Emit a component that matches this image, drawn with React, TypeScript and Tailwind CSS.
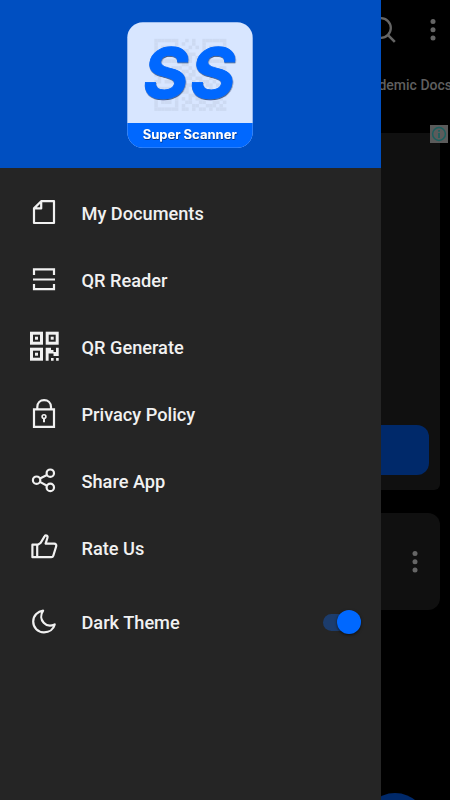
import React from 'react';

interface MenuItem {
  label: string;
  icon: React.ReactNode;
}

interface QrFinderProps {
  x: number;
  y: number;
}

const QrFinder: React.FC<QrFinderProps> = ({ x, y }) => (
  <>
    <rect x={x + 1.5} y={y + 1.5} width="10" height="10" fill="none" stroke="currentColor" strokeWidth="3" />
    <rect x={x + 5} y={y + 5} width="3" height="3" fill="currentColor" />
  </>
);

const Icon: React.FC<{ children: React.ReactNode }> = ({ children }) => (
  <svg
    className="h-8 w-8 shrink-0"
    viewBox="0 0 32 32"
    fill="none"
    stroke="currentColor"
    strokeWidth="2.2"
  >
    {children}
  </svg>
);

const menuItems: MenuItem[] = [
  {
    label: 'My Documents',
    icon: (
      <Icon>
        <path d="M13.2 4.2H26V26H6V11.4ZM13.2 4.2V11.4H6" strokeLinejoin="round" />
      </Icon>
    ),
  },
  {
    label: 'QR Reader',
    icon: (
      <Icon>
        <path d="M6 11V5.3H26V11M5 15.5H27M6 20V25.2H26V20" />
      </Icon>
    ),
  },
  {
    label: 'QR Generate',
    icon: (
      <Icon>
        <g stroke="none">
          <QrFinder x={2} y={0.7} />
          <QrFinder x={17.7} y={0.7} />
          <QrFinder x={2} y={16.7} />
          <path
            d="M17.7 16.7H23V19H25.5V21H28V16.7H30.7V25H25.5V22.5H20.6V29.7H17.7ZM23 27H25.6V29.7H23ZM28.1 27H30.7V29.7H28.1Z"
            fill="currentColor"
          />
        </g>
      </Icon>
    ),
  },
  {
    label: 'Privacy Policy',
    icon: (
      <Icon>
        <path d="M6 11.3H26V28.8H6ZM9.3 11V9C9.3 4.8 12.2 2.2 16.1 2.2S23 4.8 23 9V11" />
        <circle cx="16" cy="18.6" r="1.9" strokeWidth="1.6" />
        <path d="M16 20.5V24.2" strokeWidth="2" />
      </Icon>
    ),
  },
  {
    label: 'Share App',
    icon: (
      <Icon>
        <circle cx="8.6" cy="15.2" r="3.7" />
        <circle cx="22.3" cy="8.2" r="3.7" />
        <circle cx="22.3" cy="22.4" r="3.7" />
        <path d="M11.9 13.5L19 9.9M11.9 16.9L19 20.7" />
      </Icon>
    ),
  },
  {
    label: 'Rate Us',
    icon: (
      <Icon>
        <path
          d="M4.4 12.7H9.2V25.2H4.4ZM9.2 13.2L12.7 10.8L16.4 4.6C17.3 2.5 20.2 3.6 19.4 6L17.6 11.7H26.2C27.8 11.7 28.6 12.9 28.2 14.3L25.3 23.7C25 24.7 24.3 25.2 23.3 25.2H9.2"
          strokeLinejoin="round"
        />
      </Icon>
    ),
  },
];

// decorative code behind the logo letters, one string per row of modules
const qrRows = [
  '111111100101001111111',
  '100000101001001000001',
  '101110100010101011101',
  '101110101100001011101',
  '101110100111001011101',
  '100000101010101000001',
  '111111101010101111111',
  '000000001100100000000',
  '110101110010110101011',
  '011010001101011010010',
  '101101101011001101101',
  '010010010110110010110',
  '110111101001011101001',
  '000000001110100110110',
  '111111100101101010011',
  '100000101100011101100',
  '101110100011101011101',
  '101110101010110110010',
  '101110100110011001101',
  '100000101001100111010',
  '111111101101011010111',
];

const Logo: React.FC = () => (
  <svg className="h-[126px] w-[126px]" viewBox="0 0 126 126">
    <defs>
      <clipPath id="logo-clip">
        <rect x="0.3" y="0.3" width="125.4" height="125.4" rx="15.5" />
      </clipPath>
      <filter id="logo-shadow" x="-10%" y="-10%" width="120%" height="130%">
        <feDropShadow dx="0.4" dy="1" stdDeviation="0.7" floodColor="#001b4d" floodOpacity="0.7" />
      </filter>
    </defs>
    <g clipPath="url(#logo-clip)">
      <rect width="126" height="126" fill="#d8e6ff" />
      <g fill="#cddaf2">
        {qrRows.map((row, y) =>
          row.split('').map((cell, x) =>
            cell === '1' ? (
              <rect key={`${x}-${y}`} x={27.3 + x * 3.43} y={16.8 + y * 3.43} width="3.5" height="3.5" />
            ) : null
          )
        )}
      </g>
      <rect y="101" width="126" height="25" fill="#0068ff" />
    </g>
    <g filter="url(#logo-shadow)" fontFamily="Inter, 'Open Sans', sans-serif">
      <text
        transform="translate(0 75.8) skewX(-9)"
        x="13 60"
        y="0"
        fontSize="69.5"
        fontWeight="700"
        fill="#0068ff"
        stroke="#0068ff"
        strokeWidth="0.8"
      >
        SS
      </text>
      <text
        x="15.7"
        y="117.2"
        fontSize="12.6"
        fontWeight="700"
        fill="#ffffff"
        textLength="94"
        lengthAdjust="spacingAndGlyphs"
      >
        Super Scanner
      </text>
    </g>
  </svg>
);

const MoreDots: React.FC = () => (
  <svg className="h-6 w-2 shrink-0" viewBox="0 0 8 24" fill="currentColor">
    <circle cx="4" cy="3.5" r="2.5" />
    <circle cx="4" cy="11.8" r="2.5" />
    <circle cx="4" cy="20.1" r="2.5" />
  </svg>
);

const Backdrop: React.FC = () => (
  <div className="flex h-full w-full flex-col">
    <div className="flex h-[60px] shrink-0 items-center justify-end gap-8 pr-[13px] text-[#656565]">
      <svg className="h-7 w-7" viewBox="0 0 28 28" fill="none" stroke="currentColor" strokeWidth="2.3">
        <circle cx="12" cy="12" r="9.8" />
        <path d="M18.8 18.8L25.8 25.8" strokeWidth="2.6" />
      </svg>
      <MoreDots />
    </div>
    <div className="flex h-[65px] shrink-0 justify-end pt-[15px]">
      <span className="-mr-0.5 text-sm font-medium whitespace-nowrap text-[#5f5f5f]">Academic Docs</span>
    </div>
    <div className="relative mx-[10px] mt-2 flex h-[357px] shrink-0 flex-col justify-end rounded-b-md bg-[#101010] px-[11px] pb-[15px]">
      <div className="h-[50px] rounded-xl bg-[#00296a]"></div>
      <svg className="absolute -top-2 -right-2 h-[18px] w-[18px]" viewBox="0 0 18 18" fill="none">
        <rect width="18" height="18" fill="#5b5b5b" />
        <circle cx="9" cy="9" r="6.4" stroke="#1b605f" strokeWidth="1.5" />
        <path d="M9 8V13M9 5V6.7" stroke="#1b605f" strokeWidth="1.7" />
      </svg>
    </div>
    <div className="mx-[10px] mt-[23px] flex h-[97px] shrink-0 items-center justify-end rounded-xl bg-[#101010] pr-[21.5px] text-[#666666]">
      <MoreDots />
    </div>
    <div className="mt-[183px] mr-[23px] h-16 w-16 shrink-0 self-end rounded-full bg-[#00296a]"></div>
  </div>
);

const Drawer: React.FC = () => (
  <aside className="absolute inset-y-0 left-0 flex w-[381px] flex-col bg-[#252525] text-[#f1f1f1]">
    <header className="flex h-[168px] shrink-0 justify-center bg-[#004fc1] pt-[22px] pr-[2px]">
      <Logo />
    </header>
    <nav className="flex flex-col pt-[11.5px]">
      {menuItems.map((item) => (
        <a key={item.label} className="flex h-[67px] items-center gap-[21.5px] pl-7">
          {item.icon}
          <span className="pt-0.5 text-[18.2px] leading-6 font-medium">{item.label}</span>
        </a>
      ))}
    </nav>
    <div className="mt-[7px] flex h-[67px] items-center gap-[21.5px] pr-5 pl-7">
      <Icon>
        <path
          d="M15.1 4.7C10 5.2 5.2 9.6 5.2 15.6C5.2 21.7 9.8 26.3 16 26.3C21.3 26.3 25.6 23.2 26.7 18.4C22.2 20.6 18.2 19.4 15.7 16.7C12.8 13.6 12.3 8.8 15.1 4.7Z"
          strokeLinejoin="round"
        />
      </Icon>
      <span className="flex-1 pt-0.5 text-[18.2px] leading-6 font-medium">Dark Theme</span>
      <div className="flex h-[17px] w-[38px] items-center justify-end rounded-full bg-[#1c3c6c]">
        <span className="h-6 w-6 shrink-0 rounded-full bg-[#0068ff] shadow-sm shadow-black/50"></span>
      </div>
    </div>
  </aside>
);

const App: React.FC = () => {
  return (
    <div className="relative h-[800px] w-[450px] overflow-hidden bg-black font-[Roboto,sans-serif]">
      <Backdrop />
      <Drawer />
    </div>
  );
};

export default App;
